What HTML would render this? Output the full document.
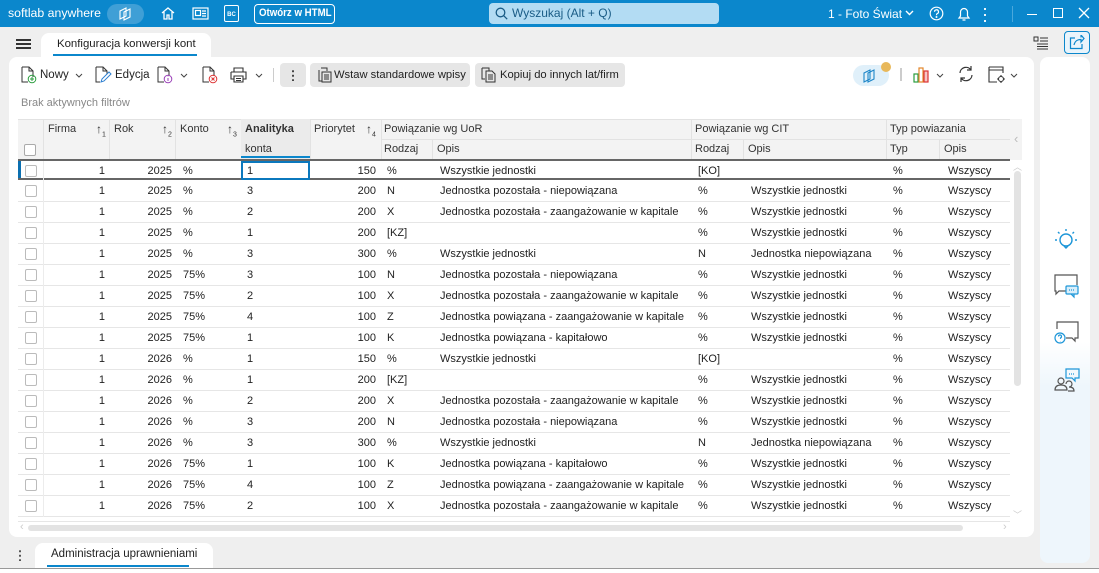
<!DOCTYPE html>
<html><head><meta charset="utf-8">
<style>
*{box-sizing:border-box;margin:0;padding:0}
body{width:1099px;height:573px;overflow:hidden;background:#efefef;font-family:"Liberation Sans",sans-serif;font-size:11px;color:#222;position:relative}
.a{position:absolute;white-space:nowrap}
#top{left:0;top:0;width:1099px;height:27px;background:#0b87cc;color:#fff}
.card{background:#fff;border-radius:8px}
.hd{position:absolute;font-size:11px;color:#333;white-space:nowrap}
.row{position:absolute;left:18px;width:992px;height:21px;border-bottom:1px solid #e6e6e6}
.row span{position:absolute;top:4px;white-space:nowrap}
.cb{position:absolute;left:7px;top:4px;width:12px;height:12px;border:1px solid #bbb;border-radius:2px;background:#fff}
.r{text-align:right}
.vl{position:absolute;top:0;width:1px;height:21px;background:#ececec}
</style></head><body>
<div id="top" class="a">
 <div class="a" style="left:8px;top:6px;font-size:12.3px">softlab anywhere</div>
 <div class="a" style="left:107px;top:4px;width:37px;height:20px;border-radius:10px;background:#3f9fd6"></div>
 <svg class="a" style="left:117px;top:7px" width="17" height="14" viewBox="0 0 17 14" fill="none" stroke="#fff" stroke-width="1.1"><path d="M3 4l6-3 0 8-6 3z M7 5l6-3v8l-6 3z"/></svg>
 <svg class="a" style="left:160px;top:6px" width="16" height="15" viewBox="0 0 16 15" fill="none" stroke="#fff" stroke-width="1.3"><path d="M2 7l6-5 6 5M4 6v7h3v-4h2v4h3V6"/></svg>
 <svg class="a" style="left:192px;top:7px" width="17" height="13" viewBox="0 0 17 13" fill="none" stroke="#fff" stroke-width="1.2"><rect x="1" y="1" width="15" height="11"/><rect x="3.5" y="3.5" width="5" height="5"/><path d="M10 4h4M10 6.5h4M10 9h4"/></svg>
 <div class="a" style="left:224px;top:5px;width:15px;height:17px;border:1.3px solid #fff;border-radius:2px;font-size:6px;text-align:center;line-height:18px;font-weight:bold">BC</div>
 <div class="a" style="left:254px;top:4px;width:81px;height:20px;border:1.3px solid #fff;border-radius:4px"></div>
 <div class="a" style="left:254px;top:7px;width:81px;text-align:center;font-weight:bold;font-size:11px"><span style="display:inline-block;transform:scaleX(0.88)">Otwórz w HTML</span></div>
 <div class="a" style="left:489px;top:3px;width:230px;height:21px;background:#b3dcf3;border-radius:4px;color:#1a5c86;font-size:12px">
  <svg class="a" style="left:6px;top:4px" width="13" height="13" viewBox="0 0 13 13" fill="none" stroke="#1a5c86" stroke-width="1.3"><circle cx="5.5" cy="5.5" r="4.3"/><path d="M8.7 8.7l3.5 3.5"/></svg>
  <span class="a" style="left:23px;top:3px">Wyszukaj (Alt + Q)</span></div>
 <div class="a" style="left:828px;top:7px;font-size:12px">1 - Foto Świat</div>
 <svg class="a" style="left:905px;top:10px" width="9" height="6" viewBox="0 0 9 6" fill="none" stroke="#fff" stroke-width="1.4"><path d="M1 1l3.5 3.5L8 1"/></svg>
 <svg class="a" style="left:929px;top:6px" width="15" height="15" viewBox="0 0 15 15" fill="none" stroke="#fff" stroke-width="1.2"><circle cx="7.5" cy="7.5" r="6.3"/><path d="M5.5 5.8a2 2 0 1 1 2.6 1.9c-.6.3-.6.8-.6 1.5"/><circle cx="7.5" cy="11" r=".4" fill="#fff"/></svg>
 <svg class="a" style="left:957px;top:5px" width="14" height="17" viewBox="0 0 14 17" fill="none" stroke="#fff" stroke-width="1.2"><path d="M2 13h10l-1.5-2V7a3.5 3.5 0 0 0-7 0v4z M5.5 15h3"/></svg>
 <div class="a" style="left:984px;top:6px;width:2px;height:16px;background:radial-gradient(circle,#fff 1px,transparent 1.2px) 0 0/2px 6px"></div>
 <div class="a" style="left:1012px;top:6px;width:1px;height:16px;background:#4aa8dc"></div>
 <div class="a" style="left:1027px;top:14px;width:10px;height:1.3px;background:#fff"></div>
 <div class="a" style="left:1053px;top:8px;width:10px;height:10px;border:1.3px solid #fff"></div>
 <svg class="a" style="left:1078px;top:7px" width="12" height="12" viewBox="0 0 12 12" stroke="#fff" stroke-width="1.3"><path d="M1 1l10 10M11 1L1 11"/></svg>
</div>
<div class="a" style="left:16px;top:39px;width:15px;height:2px;background:#333;box-shadow:0 4px 0 #333,0 8px 0 #333"></div>
<div class="a" style="left:41px;top:33px;width:170px;height:26px;background:#fff;border-radius:8px 8px 0 0"></div>
<div class="a" style="left:57px;top:38px;font-size:11.4px;color:#222">Konfiguracja konwersji kont</div>
<div class="a" style="left:53px;top:54px;width:144px;height:2px;background:#0b87cc"></div>
<svg class="a" style="left:1033px;top:36px" width="16" height="14" viewBox="0 0 16 14" fill="none" stroke="#333" stroke-width="1"><path d="M1 1h4v4H1zM7 2h8M7 5h8M4 8h11M4 10.5h11M4 13h11"/></svg>
<div class="a" style="left:1064px;top:31px;width:26px;height:23px;border:1.2px solid #0b87cc;border-radius:4px;background:#e9f4fb"></div>
<svg class="a" style="left:1069px;top:35px" width="16" height="15" viewBox="0 0 16 15" fill="none" stroke="#0b87cc" stroke-width="1.2"><path d="M6 3H1.5v10.5H13V9 M5 10c1-4 3-5.5 7-5.5V7l3-3.5L12 0v2.5"/></svg>
<div class="a card" style="left:9px;top:57px;width:1025px;height:480px"></div>
<svg class="a" style="left:20px;top:66px" width="17" height="18" viewBox="0 0 17 18" fill="none" stroke="#333" stroke-width="1"><path d="M2 1h7l4 4v6M9 1v4h4M2 1v15h6"/><circle cx="12" cy="13" r="3.8" stroke="#2a9d3e"/><path d="M12 11v4M10 13h4" stroke="#2a9d3e"/></svg>
<div class="a" style="left:40px;top:69px;font-size:11.5px">Nowy</div>
<svg class="a" style="left:75px;top:73px" width="8" height="5" viewBox="0 0 8 5" fill="none" stroke="#444"><path d="M1 1l3 3 3-3"/></svg>
<svg class="a" style="left:94px;top:66px" width="18" height="18" viewBox="0 0 18 18" fill="none" stroke="#333" stroke-width="1"><path d="M2 1h7l4 4v3M9 1v4h4M2 1v15h4"/><path d="M7 16l1-3 7-7 2 2-7 7z" stroke="#2d7fd0"/></svg>
<div class="a" style="left:115px;top:69px;font-size:11.5px">Edycja</div>
<svg class="a" style="left:156px;top:66px" width="18" height="18" viewBox="0 0 18 18" fill="none" stroke="#333" stroke-width="1"><path d="M2 1h7l4 4v5M9 1v4h4M2 1v15h6"/><circle cx="12" cy="13" r="3.8" stroke="#9a3fb8"/><path d="M12 12v3M12 10.6v.4" stroke="#9a3fb8"/></svg>
<svg class="a" style="left:180px;top:73px" width="8" height="5" viewBox="0 0 8 5" fill="none" stroke="#444"><path d="M1 1l3 3 3-3"/></svg>
<svg class="a" style="left:201px;top:66px" width="18" height="18" viewBox="0 0 18 18" fill="none" stroke="#333" stroke-width="1"><path d="M2 1h7l4 4v5M9 1v4h4M2 1v15h6"/><circle cx="12" cy="13" r="3.8" stroke="#d33"/><path d="M10.5 11.5l3 3M13.5 11.5l-3 3" stroke="#d33"/></svg>
<svg class="a" style="left:230px;top:67px" width="17" height="16" viewBox="0 0 17 16" fill="none" stroke="#333" stroke-width="1.1"><path d="M4 5V1h9v4M1 5h15v7h-3M4 12H1V5M4 9h9v6H4z M6 11.5h5M6 13.5h5"/></svg>
<svg class="a" style="left:255px;top:73px" width="8" height="5" viewBox="0 0 8 5" fill="none" stroke="#444"><path d="M1 1l3 3 3-3"/></svg>
<div class="a" style="left:273px;top:68px;width:1px;height:14px;background:#ccc"></div>
<div class="a" style="left:280px;top:63px;width:26px;height:24px;background:#e6e6e6;border-radius:4px"></div>
<div class="a" style="left:292px;top:69px;width:2px;height:12px;background:radial-gradient(circle,#444 1px,transparent 1.2px) 0 0/2px 4.5px"></div>
<div class="a" style="left:310px;top:63px;width:160px;height:24px;background:#e6e6e6;border-radius:4px"></div>
<svg class="a" style="left:317px;top:67px" width="15" height="16" viewBox="0 0 15 16" fill="none" stroke="#333" stroke-width="1"><path d="M4 1h6v3M2 3v11h3M5 5h9v10H5zM7 8h5M7 10h5M7 12h5"/></svg>
<div class="a" style="left:334px;top:69px;font-size:11.2px">Wstaw standardowe wpisy</div>
<div class="a" style="left:475px;top:63px;width:150px;height:24px;background:#e6e6e6;border-radius:4px"></div>
<svg class="a" style="left:481px;top:67px" width="15" height="16" viewBox="0 0 15 16" fill="none" stroke="#333" stroke-width="1"><path d="M1 1h7v3M1 1v11h3M5 4h6l3 3v8H5zM7 8h5M7 10h5M7 12h5"/></svg>
<div class="a" style="left:500px;top:69px;font-size:11.2px">Kopiuj do innych lat/firm</div>
<div class="a" style="left:853px;top:65px;width:36px;height:21px;border-radius:11px;background:#e0f0fa"></div>
<svg class="a" style="left:862px;top:68px" width="18" height="15" viewBox="0 0 18 15" fill="none" stroke="#1d86c8" stroke-width="1.1"><path d="M2 5l6-3v9l-6 3z M6 5l6-3v9l-6 3z"/></svg>
<div class="a" style="left:881px;top:62px;width:10px;height:10px;border-radius:5px;background:#e8b85a"></div>
<div class="a" style="left:900px;top:68px;width:1.5px;height:13px;background:#ccc"></div>
<svg class="a" style="left:913px;top:66px" width="18" height="17" viewBox="0 0 18 17" fill="none" stroke-width="1.2"><rect x="1" y="8" width="4" height="8" stroke="#2a9d3e"/><rect x="6" y="2" width="4" height="14" stroke="#e3862a"/><rect x="11" y="5" width="4" height="11" stroke="#d33" fill="#f6c5c5"/></svg>
<svg class="a" style="left:936px;top:73px" width="8" height="5" viewBox="0 0 8 5" fill="none" stroke="#444"><path d="M1 1l3 3 3-3"/></svg>
<svg class="a" style="left:957px;top:65px" width="18" height="18" viewBox="0 0 18 18" fill="none" stroke="#333" stroke-width="1.2"><path d="M3 8a6 6 0 0 1 11-3M15 10a6 6 0 0 1-11 3M14 1v4h-4M4 17v-4h4"/></svg>
<svg class="a" style="left:988px;top:66px" width="18" height="18" viewBox="0 0 18 18" fill="none" stroke="#333" stroke-width="1.1"><path d="M1 1h14v6M1 4h14M1 1v15h8"/><circle cx="13" cy="13" r="2.5"/><path d="M13 9v1.5M13 15.5V17M9 13h1.5M15.5 13H17"/></svg>
<svg class="a" style="left:1010px;top:73px" width="8" height="5" viewBox="0 0 8 5" fill="none" stroke="#444"><path d="M1 1l3 3 3-3"/></svg>
<div class="a" style="left:21px;top:97px;font-size:11px;color:#888">Brak aktywnych filtrów</div>
<div class="a" style="left:18px;top:119px;width:992px;height:41px;background:#f3f3f3;border-top:1px solid #e2e2e2"></div>
<div class="a" style="left:381px;top:139px;width:629px;height:1px;background:#e2e2e2"></div>
<div class="a" style="left:241px;top:139px;width:69px;height:1px;background:#e2e2e2"></div>
<div class="a" style="left:241px;top:119px;width:69px;height:41px;background:#ebebeb"></div>
<div class="a" style="left:241px;top:156px;width:69px;height:2px;background:#0b87cc"></div>
<div class="a" style="left:24px;top:144px;width:12px;height:12px;border:1px solid #aaa;border-radius:2px;background:#fff"></div>
<div class="hd" style="left:48px;top:123px">Firma</div>
<div class="hd" style="left:114px;top:123px">Rok</div>
<div class="hd" style="left:180px;top:123px">Konto</div>
<div class="hd" style="left:245px;top:123px;font-weight:bold">Analityka</div>
<div class="hd" style="left:245px;top:143px">konta</div>
<div class="hd" style="left:314px;top:123px">Priorytet</div>
<div class="hd" style="left:384px;top:123px">Powiązanie wg UoR</div>
<div class="hd" style="left:384px;top:143px">Rodzaj</div>
<div class="hd" style="left:437px;top:143px">Opis</div>
<div class="hd" style="left:695px;top:123px">Powiązanie wg CIT</div>
<div class="hd" style="left:695px;top:143px">Rodzaj</div>
<div class="hd" style="left:748px;top:143px">Opis</div>
<div class="hd" style="left:890px;top:123px">Typ powiazania</div>
<div class="hd" style="left:890px;top:143px">Typ</div>
<div class="hd" style="left:944px;top:143px">Opis</div>
<div class="hd" style="left:96px;top:122px;font-size:12px">↑<sub style="font-size:7px">1</sub></div>
<div class="hd" style="left:162px;top:122px;font-size:12px">↑<sub style="font-size:7px">2</sub></div>
<div class="hd" style="left:227px;top:122px;font-size:12px">↑<sub style="font-size:7px">3</sub></div>
<div class="hd" style="left:366px;top:122px;font-size:12px">↑<sub style="font-size:7px">4</sub></div>
<div class="a" style="left:43px;top:119px;width:1px;height:41px;background:#e2e2e2"></div>
<div class="a" style="left:109px;top:119px;width:1px;height:41px;background:#e2e2e2"></div>
<div class="a" style="left:175px;top:119px;width:1px;height:41px;background:#e2e2e2"></div>
<div class="a" style="left:310px;top:119px;width:1px;height:41px;background:#e2e2e2"></div>
<div class="a" style="left:381px;top:119px;width:1px;height:41px;background:#e2e2e2"></div>
<div class="a" style="left:432px;top:139px;width:1px;height:21px;background:#e2e2e2"></div>
<div class="a" style="left:691px;top:119px;width:1px;height:41px;background:#e2e2e2"></div>
<div class="a" style="left:743px;top:139px;width:1px;height:21px;background:#e2e2e2"></div>
<div class="a" style="left:886px;top:119px;width:1px;height:41px;background:#e2e2e2"></div>
<div class="a" style="left:939px;top:139px;width:1px;height:21px;background:#e2e2e2"></div>
<div class="a" style="left:1010px;top:119px;width:12px;height:41px;background:#f3f3f3"></div>
<div class="a" style="left:1014px;top:131px;color:#bbb;font-size:13px">‹</div>
<div id="rows"></div>
<div class="a" style="left:1014px;top:171px;width:7px;height:215px;background:#e3e3e3;border-radius:4px"></div>
<div class="a" style="left:1013px;top:160px;color:#ccc;font-size:9px">︿</div>
<div class="a" style="left:1013px;top:508px;color:#ccc;font-size:9px">﹀</div>
<div class="a" style="left:18px;top:521px;width:992px;height:1px;background:#e6e6e6"></div>
<div class="a" style="left:28px;top:525px;width:935px;height:6px;background:#e3e3e3;border-radius:3px"></div>
<div class="a" style="left:20px;top:521px;color:#ccc;font-size:11px">‹</div>
<div class="a" style="left:1003px;top:521px;color:#ccc;font-size:11px">›</div>
<div class="a card" style="left:1040px;top:57px;width:50px;height:506px;background:linear-gradient(#fff 0,#fff 285px,#eef6fc 330px)"></div>
<svg class="a" style="left:1054px;top:228px" width="24" height="24" viewBox="0 0 24 24" fill="none" stroke="#1d96d8" stroke-width="1.4"><circle cx="12" cy="12" r="6"/><path d="M10 18l2 2 2-2M12 1v2M4 4l1.5 1.5M20 4l-1.5 1.5M1 12h2M21 12h2"/></svg>
<svg class="a" style="left:1053px;top:274px" width="27" height="25" viewBox="0 0 27 25" fill="none" stroke-width="1.2"><path d="M14 17H6l-3 3v-3H2V1h22v10" stroke="#555"/><rect x="13" y="12" width="12" height="8" rx="1" stroke="#1d96d8" fill="#d9eefa"/><path d="M16 16h6" stroke="#1d96d8" stroke-dasharray="1 1"/><path d="M21 20v3l-3-3" stroke="#1d96d8"/></svg>
<svg class="a" style="left:1054px;top:321px" width="26" height="25" viewBox="0 0 26 25" fill="none" stroke-width="1.2"><path d="M3 8V1h21v16h-3v3l-3-3h-6" stroke="#555"/><circle cx="6" cy="17" r="5" stroke="#1d96d8"/><path d="M4.5 15.5a1.5 1.5 0 1 1 2 1.4v1M6.5 20v.3" stroke="#1d96d8"/></svg>
<svg class="a" style="left:1054px;top:368px" width="27" height="25" viewBox="0 0 27 25" fill="none" stroke-width="1.2"><path d="M12 1h13v9h-4v3l-3-3h-6z" stroke="#1d96d8"/><path d="M15 6h6" stroke="#1d96d8" stroke-dasharray="1 1"/><circle cx="7" cy="13" r="3" stroke="#555"/><path d="M1 22c0-4 3-5 6-5s6 1 6 5z M12 16a3 3 0 1 1 3 3c3 0 5 1 5 4h-6" stroke="#555"/></svg>
<div class="a" style="left:19px;top:549px;width:2px;height:12px;background:radial-gradient(circle,#555 1px,transparent 1.2px) 0 0/2px 4.5px"></div>
<div class="a" style="left:35px;top:543px;width:178px;height:30px;background:#fff;border-radius:8px 8px 0 0"></div>
<div class="a" style="left:51px;top:548px;font-size:11.5px;color:#222">Administracja uprawnieniami</div>
<div class="a" style="left:47px;top:565px;width:142px;height:2px;background:#0b87cc"></div>
<div class="a" style="left:0;top:568px;width:1099px;height:5px;background:#fff;border-top:1px solid #999"></div>
<script>
var D=[["1","2025","%","1","150","%","Wszystkie jednostki","[KO]","","%","Wszyscy"],
["1","2025","%","3","200","N","Jednostka pozostała - niepowiązana","%","Wszystkie jednostki","%","Wszyscy"],
["1","2025","%","2","200","X","Jednostka pozostała - zaangażowanie w kapitale","%","Wszystkie jednostki","%","Wszyscy"],
["1","2025","%","1","200","[KZ]","","%","Wszystkie jednostki","%","Wszyscy"],
["1","2025","%","3","300","%","Wszystkie jednostki","N","Jednostka niepowiązana","%","Wszyscy"],
["1","2025","75%","3","100","N","Jednostka pozostała - niepowiązana","%","Wszystkie jednostki","%","Wszyscy"],
["1","2025","75%","2","100","X","Jednostka pozostała - zaangażowanie w kapitale","%","Wszystkie jednostki","%","Wszyscy"],
["1","2025","75%","4","100","Z","Jednostka powiązana - zaangażowanie w kapitale","%","Wszystkie jednostki","%","Wszyscy"],
["1","2025","75%","1","100","K","Jednostka powiązana - kapitałowo","%","Wszystkie jednostki","%","Wszyscy"],
["1","2026","%","1","150","%","Wszystkie jednostki","[KO]","","%","Wszyscy"],
["1","2026","%","1","200","[KZ]","","%","Wszystkie jednostki","%","Wszyscy"],
["1","2026","%","2","200","X","Jednostka pozostała - zaangażowanie w kapitale","%","Wszystkie jednostki","%","Wszyscy"],
["1","2026","%","3","200","N","Jednostka pozostała - niepowiązana","%","Wszystkie jednostki","%","Wszyscy"],
["1","2026","%","3","300","%","Wszystkie jednostki","N","Jednostka niepowiązana","%","Wszyscy"],
["1","2026","75%","1","100","K","Jednostka powiązana - kapitałowo","%","Wszystkie jednostki","%","Wszyscy"],
["1","2026","75%","4","100","Z","Jednostka powiązana - zaangażowanie w kapitale","%","Wszystkie jednostki","%","Wszyscy"],
["1","2026","75%","2","100","X","Jednostka pozostała - zaangażowanie w kapitale","%","Wszystkie jednostki","%","Wszyscy"]];
var h="";
D.forEach(function(r,i){var t=160+i*21;
var st=i==0?"border-top:2px solid #666;border-bottom:2px solid #666;":"";
h+='<div class="row" style="top:'+(i==0?159:t)+'px;'+st+'">';
if(i==0)h+='<div style="position:absolute;left:0;top:0;width:3px;height:100%;background:#0b6fb0"></div>';
h+='<div class="cb"></div><div class="vl" style="left:25px"></div>';
h+='<span class="r" style="right:905px">'+r[0]+'</span>';
h+='<span class="r" style="right:838px">'+r[1]+'</span>';
h+='<span style="left:165px">'+r[2]+'</span>';
h+='<span style="left:229px">'+r[3]+'</span>';
h+='<span class="r" style="right:634px">'+r[4]+'</span>';
h+='<span style="left:369px">'+r[5]+'</span>';
h+='<span style="left:422px">'+r[6]+'</span>';
h+='<span style="left:680px">'+r[7]+'</span>';
h+='<span style="left:733px">'+r[8]+'</span>';
h+='<span style="left:875px">'+r[9]+'</span>';
h+='<span style="left:930px">'+r[10]+'</span>';
if(i==0)h+='<div style="position:absolute;left:223px;top:0;width:69px;height:19px;border:2px solid #0b78bd"></div>';
h+='</div>';});
document.getElementById("rows").innerHTML=h;
</script>
</body></html>
